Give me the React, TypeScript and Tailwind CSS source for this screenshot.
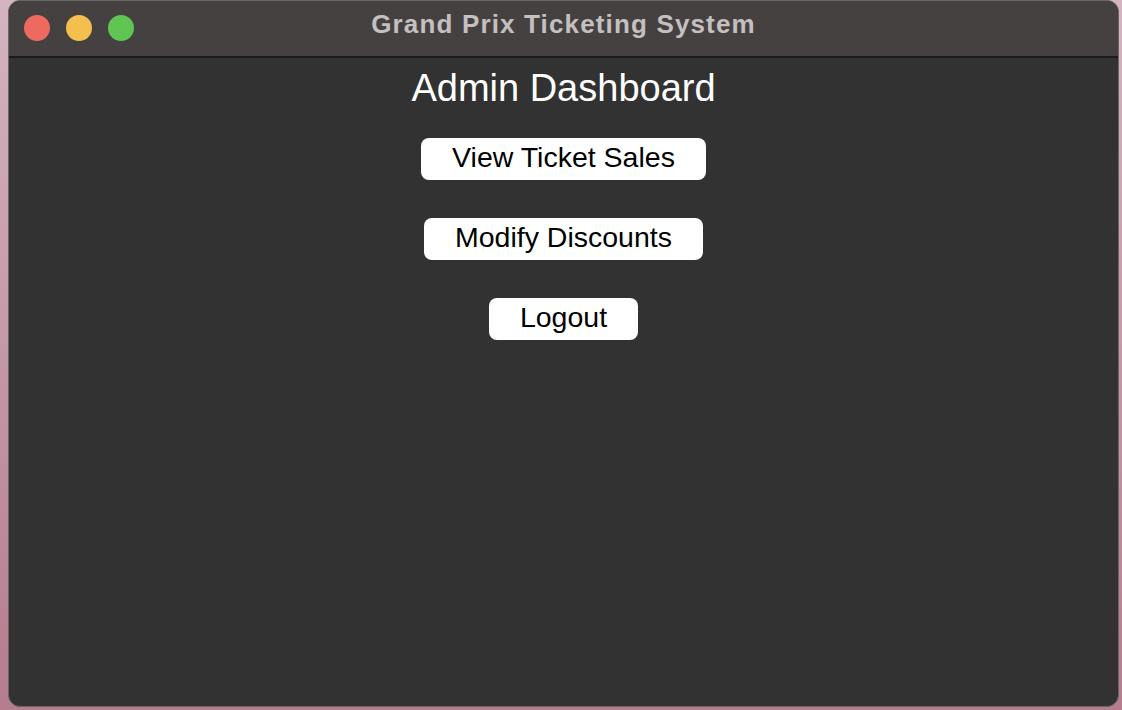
const buttons = ['View Ticket Sales', 'Modify Discounts', 'Logout'];

const App = () => {
  return (
    <div className="w-[1122px] h-[710px] bg-gradient-to-b from-[#d3b4c0] to-[#b57c8e] pl-[8px] pr-[3px] pb-[3px] flex">
      <div
        className="flex-1 flex flex-col rounded-[12px] overflow-hidden border border-[#6a6666] bg-[#323232]"
        style={{ fontFamily: '"Liberation Sans", Arial, sans-serif' }}
      >
        {/* title bar */}
        <div className="relative h-[57px] shrink-0 bg-[#464141] border-b-2 border-[#1c1a1a] flex items-center justify-center">
          <div className="absolute left-[15px] top-[14px] flex gap-[16px]">
            <span className="w-[26px] h-[26px] rounded-full bg-[#ee6a5f]" />
            <span className="w-[26px] h-[26px] rounded-full bg-[#f5bf4f]" />
            <span className="w-[26px] h-[26px] rounded-full bg-[#61c554]" />
          </div>
          <span className="text-[26px] font-bold tracking-[1.15px] text-[#c4c0c0] leading-none -mt-[9px]">
            Grand Prix Ticketing System
          </span>
        </div>

        {/* content */}
        <div className="flex flex-col items-center pt-[8px]">
          <h1 className="text-[38px] leading-[44px] text-white">Admin Dashboard</h1>
          <div className="mt-[28px] flex flex-col items-center gap-[38px]">
            {buttons.map((label) => (
              <button
                key={label}
                className="h-[42px] px-[31px] pb-[3px] bg-white rounded-[8px] text-[28.5px] text-black flex items-center"
              >
                {label}
              </button>
            ))}
          </div>
        </div>
      </div>
    </div>
  );
};

export default App;
